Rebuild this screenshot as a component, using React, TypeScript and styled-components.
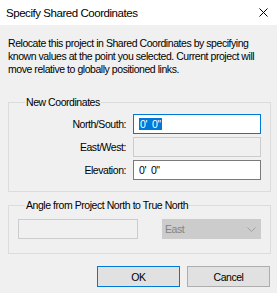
import styled, { createGlobalStyle } from 'styled-components'

const GlobalStyle = createGlobalStyle`
  html, body {
    margin: 0;
    padding: 0;
    background: #f0f0f0;
  }
  body {
    font-family: 'Liberation Sans', Arial, sans-serif;
    font-size: 10.5px;
    letter-spacing: -0.45px;
    color: #000;
  }
`

const Window = styled.div`
  width: 277px;
  height: 293px;
  display: flex;
  flex-direction: column;
  background: #f0f0f0;
  overflow: hidden;
`

const TitleBar = styled.div`
  height: 25px;
  background: #fff;
  display: flex;
  align-items: center;
  justify-content: space-between;
  padding: 0 6px;
  font-size: 11.5px;
  letter-spacing: -0.45px;
  color: #000;
`

const CloseIcon = styled.svg`
  width: 9px;
  height: 9px;
  margin-right: 3px;
`

const Body = styled.div`
  display: flex;
  flex-direction: column;
  padding: 12px 6px 0 8px;
`

const Description = styled.p`
  margin: 0;
  line-height: 13px;
  color: #000;
`

const GroupBox = styled.fieldset<{ $top: number; $padTop: number; $padBottom: number }>`
  margin: ${(p) => p.$top}px 0 0 0;
  padding: ${(p) => p.$padTop}px 9px ${(p) => p.$padBottom}px 9px;
  min-width: 0;
  border: 1px solid #dcdcdc;
  border-radius: 0;
`

const Legend = styled.legend`
  margin-left: 7px;
  padding: 0 1px;
  line-height: 14px;
`

const FieldGrid = styled.div`
  display: grid;
  grid-template-columns: 108px 128px;
  column-gap: 7px;
  row-gap: 3px;
  align-items: center;
`

const Label = styled.label`
  justify-self: end;
`

const TextField = styled.div<{ $state: 'focus' | 'disabled' | 'normal' }>`
  height: 20px;
  box-sizing: border-box;
  display: flex;
  align-items: center;
  padding: 0 5px;
  background: ${(p) => (p.$state === 'disabled' ? '#f0f0f0' : '#fff')};
  border: 1px solid
    ${(p) =>
      p.$state === 'focus'
        ? '#0078d7'
        : p.$state === 'disabled'
        ? '#cccccc'
        : '#7a7a7a'};
`

const Selected = styled.span`
  background: #0078d7;
  color: #fff;
  padding: 0 1px;
  line-height: 12px;
`

const AngleRow = styled.div`
  display: flex;
  align-items: center;
  justify-content: space-between;
`

const AngleInput = styled(TextField)`
  width: 120px;
`

const Select = styled.div`
  width: 99px;
  height: 20px;
  box-sizing: border-box;
  display: flex;
  align-items: center;
  justify-content: space-between;
  padding: 0 4px 0 2px;
  background: #cccccc;
  border: 1px solid #cccccc;
  color: #838383;
`

const ButtonRow = styled.div`
  display: flex;
  justify-content: flex-end;
  gap: 7px;
  margin-top: 12px;
  padding-right: 1px;
`

const Button = styled.button<{ $default?: boolean }>`
  width: 83px;
  height: 21px;
  box-sizing: border-box;
  background: #e1e1e1;
  border: 1px solid ${(p) => (p.$default ? '#0078d7' : '#adadad')};
  font-family: inherit;
  font-size: inherit;
  letter-spacing: inherit;
  color: #000;
  padding: 0;
`

export default function App() {
  return (
    <>
      <GlobalStyle />
      <Window>
        <TitleBar>
          <span>Specify Shared Coordinates</span>
          <CloseIcon viewBox='0 0 9 9'>
            <path d='M0.5 0.5 L8.5 8.5 M8.5 0.5 L0.5 8.5' stroke='#000' strokeWidth='1' />
          </CloseIcon>
        </TitleBar>
        <Body>
          <Description>
            Relocate this project in Shared Coordinates by specifying known
            values at the point you selected. Current project will move
            relative to globally positioned links.
          </Description>
          <GroupBox $top={19} $padTop={5} $padBottom={11}>
            <Legend>New Coordinates</Legend>
            <FieldGrid>
              <Label>North/South:</Label>
              <TextField $state='focus'>
                <Selected>0'&nbsp;&nbsp;0"</Selected>
              </TextField>
              <Label>East/West:</Label>
              <TextField $state='disabled' />
              <Label>Elevation:</Label>
              <TextField $state='normal'>0'&nbsp;&nbsp;0"</TextField>
            </FieldGrid>
          </GroupBox>
          <GroupBox $top={6} $padTop={7} $padBottom={14}>
            <Legend>Angle from Project North to True North</Legend>
            <AngleRow>
              <AngleInput $state='disabled' />
              <Select>
                <span>East</span>
                <svg width='9' height='5' viewBox='0 0 9 5'>
                  <path d='M0.5 0.5 L4.5 4.5 L8.5 0.5' stroke='#a0a0a0' fill='none' />
                </svg>
              </Select>
            </AngleRow>
          </GroupBox>
          <ButtonRow>
            <Button $default>OK</Button>
            <Button>Cancel</Button>
          </ButtonRow>
        </Body>
      </Window>
    </>
  )
}
